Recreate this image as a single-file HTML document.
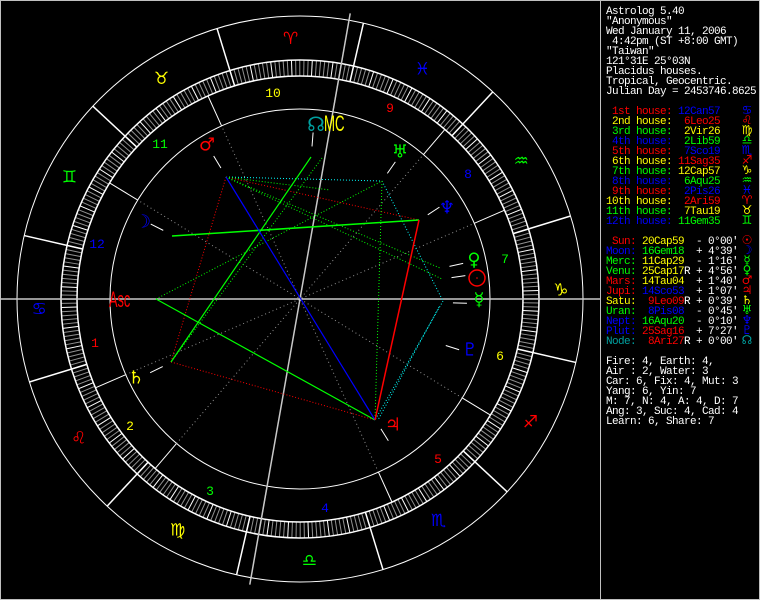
<!DOCTYPE html>
<html><head><meta charset="utf-8"><style>
html,body{margin:0;padding:0;background:#000;}
body{width:760px;height:600px;overflow:hidden;position:relative;}
svg{position:absolute;left:0;top:0;}
.t{font-family:"Liberation Mono","DejaVu Sans Mono",monospace;font-size:11px;letter-spacing:-0.6px;}
</style></head><body>
<svg id="s" width="760" height="600" xmlns="http://www.w3.org/2000/svg"></svg>
<script>
var s=document.getElementById('s'),NS='http://www.w3.org/2000/svg';
function el(n,a,t){var e=document.createElementNS(NS,n);for(var k in a)e.setAttribute(k,a[k]);if(t!==undefined)e.textContent=t;s.appendChild(e);return e;}
var cx=300,cy=299;
function P(r,a){a=a*Math.PI/180;return [cx+r*Math.cos(a),cy-r*Math.sin(a)];}
function L(p,q,c,d,w){var a={x1:p[0],y1:p[1],x2:q[0],y2:q[1],stroke:c,'stroke-width':w||1};if(d)a['stroke-dasharray']=d;el('line',a);}
el('rect',{x:0.5,y:0.5,width:759,height:599,fill:'none',stroke:'#c0c0c0'});
L([600.5,0],[600.5,600],'#c0c0c0');
for(var i=0;i<360;i++){var a=i+180-102.95;var c=(i%5==0)?'#fff':'#909090';L(P(223,a),P(239,a),c);}
el('circle',{cx:cx,cy:cy,r:283,fill:'none',stroke:'#fff'});
el('circle',{cx:cx,cy:cy,r:239,fill:'none',stroke:'#fff','stroke-width':1.5});
el('circle',{cx:cx,cy:cy,r:223,fill:'none',stroke:'#fff','stroke-width':1.5});
el('circle',{cx:cx,cy:cy,r:190,fill:'none',stroke:'#fff'});
var R='#ff0000',Y='#ffff00',G='#00ff00',B='#0000ff';
var ec=[R,Y,G,B];
var signs=['♈','♉','♊','♋','♌','♍','♎','♏','♐','♑','♒','♓'];
for(var i=0;i<12;i++){var a=180+30*i-102.95;L(P(223,a),P(283,a),'#fff',null,1.5);
 var p=P(261,a+15);el('text',{x:p[0],y:p[1]+6,fill:ec[i%4],'font-family':'DejaVu Sans',style:'font-size:17px','text-anchor':'middle'},signs[i]+'\uFE0E');}
var cusps=[180,203.47,229.48,260.03,294.37,328.63,0,23.47,49.48,80.03,114.37,148.63];
for(var i=0;i<12;i++){L(P(190,cusps[i]),P(223,cusps[i]),'#fff');}
[203.47,229.48,294.37,328.63].forEach(function(a){L(P(190,a),P(190,a+180),'#909090','1 3');});
L([0,cy],[600,cy],'#c8c8c8',null,1.5);
L(P(290,80.03),P(290,260.03),'#c8c8c8',null,1.5);
var hn=[[95,342,R],[130,425,Y],[210,490,G],[325,507,B],[438,458,R],[500,355,Y],[505,258,G],[468,173,B],[390,107,R],[273,92,Y],[160,143,G],[97,243,B]];
hn.forEach(function(h,i){el('text',{x:h[0],y:h[1]+5,fill:h[2],'font-family':'Liberation Mono',style:'font-size:13px','text-anchor':'middle'},String(i+1));});
var Ma=[226,177],Ur=[382,181],Ne=[419,220],Me=[443,301],Ju=[375,420],Sa=[171,362],As=[156,299],Mo=[172,236],No=[311,157],Su=[442,279],Ve=[440,268];
var D='1 2';
L(Ma,Ur,'#00ffff',D);L(Ur,Me,'#00ffff',D);L(Me,Ju,'#00ffff',D);L([Me[0]-4,Me[1]+6],[Ju[0]+3,Ju[1]],'#00ffff',D);
L(Ma,Ne,R,D);L(Ma,Sa,R,D);L(Sa,Ju,R,D);
L(Ma,Su,G,D);L(Ma,Ve,G,D);L(As,Ur,G,D);L(Ur,Ju,G,D);L([322,158],Sa,G,D);L(Ma,[330,190],G,D);
L(Mo,Ne,G,null,1.5);L(No,Sa,G,null,1.2);L(As,Ju,G,null,1.2);
L(Ma,Ju,B,null,1.2);L(Ne,Ju,R,null,1.5);
[8.03,153.35,358.53,12.33,121.12,301.93,206.2,55.18,33.38,342.32,85.5].forEach(function(a){L(P(153,a),P(167,a),'#fff');});
function g(x,y,c,t,sz){el('text',{x:x,y:y,fill:c,'font-family':'DejaVu Sans',style:'font-size:'+(sz||18)+'px','text-anchor':'middle','dominant-baseline':'central'},t+'\uFE0E');}
g(316,124,'#00a0a0','☊',20);
el('text',{x:0,y:0,fill:Y,'font-family':'Liberation Sans',style:'font-size:22px',transform:'matrix(0.6 0 0 1 324 131)'},'MC');
g(400,152,G,'♅');g(447,208,B,'♆');g(474,260,G,'♀');
el('circle',{cx:477,cy:278,r:8,fill:'none',stroke:R,'stroke-width':1.5});el('circle',{cx:477,cy:278,r:0.8,fill:R});
g(479,300,G,'☿');g(470,350,B,'♇');g(393,425,R,'♃');g(136,378,Y,'♄');g(143,222,B,'☽');g(207,145,R,'♂');
el('text',{x:0,y:0,fill:R,'font-family':'Liberation Sans',style:'font-size:22px',transform:'matrix(0.58 0 0 1 109 307)'},'Asc');
var W='#ffffff';
function T(x,y,c,t){el('text',{x:x,y:y,fill:c,class:'t'},t).setAttribute('style','white-space:pre');}
var hdr=['Astrolog 5.40','"Anonymous"','Wed January 11, 2006',' 4:42pm (ST +8:00 GMT)','"Taiwan"','121°31E 25°03N','Placidus houses.','Tropical, Geocentric.','Julian Day = 2453746.8625'];
hdr.forEach(function(t,i){T(606,14+10*i,W,t);});
var hs=[[' 1st',R,'12Can57',B,'♋'],[' 2nd',Y,' 6Leo25',R,'♌'],[' 3rd',G,' 2Vir26',Y,'♍'],[' 4th',B,' 2Lib59',G,'♎'],[' 5th',R,' 7Sco19',B,'♏'],[' 6th',Y,'11Sag35',R,'♐'],[' 7th',G,'12Cap57',Y,'♑'],[' 8th',B,' 6Aqu25',G,'♒'],[' 9th',R,' 2Pis26',B,'♓'],['10th',Y,' 2Ari59',R,'♈'],['11th',G,' 7Tau19',Y,'♉'],['12th',B,'11Gem35',G,'♊']];
hs.forEach(function(h,i){var y=114+10*i;T(606,y,h[1],h[0]+' house:');T(678,y,h[3],h[2]);
 el('text',{x:747,y:y,fill:h[3],'font-family':'DejaVu Sans',style:'font-size:12px','text-anchor':'middle'},h[4]+'\uFE0E');});
var pl=[[' Sun:',R,'20Cap59',Y,'',' - 0°00\'','☉'],['Moon:',B,'16Gem18',G,'',' + 4°39\'','☽'],['Merc:',G,'11Cap29',Y,'',' - 1°16\'','☿'],['Venu:',G,'25Cap17',Y,'R',' + 4°56\'','♀'],['Mars:',R,'14Tau04',Y,'',' + 1°40\'','♂'],['Jupi:',R,'14Sco53',B,'',' + 1°07\'','♃'],['Satu:',Y,' 9Leo09',R,'R',' + 0°39\'','♄'],['Uran:',G,' 8Pis08',B,'',' - 0°45\'','♅'],['Nept:',B,'16Aqu20',G,'',' - 0°10\'','♆'],['Plut:',B,'25Sag16',R,'',' + 7°27\'','♇'],['Node:','#00a0a0',' 8Ari27',R,'R',' + 0°00\'','☊']];
var pc=[R,B,G,G,R,R,Y,G,B,B,'#00a0a0'];
pl.forEach(function(p,i){var y=244+10*i;T(606,y,p[1],p[0]);T(642,y,p[3],p[2]);if(p[4])T(684,y,W,'R');T(690,y,W,p[5]);
 el('text',{x:747,y:y,fill:pc[i],'font-family':'DejaVu Sans',style:'font-size:12px','text-anchor':'middle'},p[6]+'\uFE0E');});
var st=['Fire: 4, Earth: 4,','Air : 2, Water: 3','Car: 6, Fix: 4, Mut: 3','Yang: 6, Yin: 7','M: 7, N: 4, A: 4, D: 7','Ang: 3, Suc: 4, Cad: 4','Learn: 6, Share: 7'];
st.forEach(function(t,i){T(606,364+10*i,W,t);});
</script>
</body></html>
